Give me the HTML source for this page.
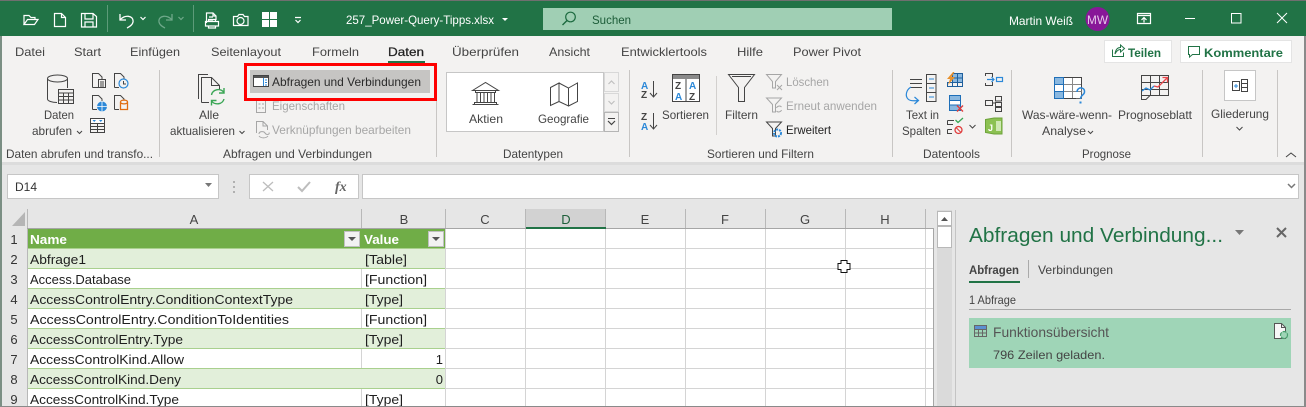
<!DOCTYPE html>
<html><head><meta charset="utf-8"><style>
html,body{margin:0;padding:0;width:1306px;height:407px;overflow:hidden;background:#e6e6e6}
svg{display:block}
text{font-family:"Liberation Sans",sans-serif;font-size:12px;fill:#444}
.w{fill:#fff}.g{fill:#a6a6a6}.d{fill:#222}.c{font-size:13px;fill:#1e1e1e}.h{font-size:13px;font-weight:bold;fill:#fff}
.n{font-size:13px;fill:#333;text-anchor:middle}
.s{fill:none;stroke:#444;stroke-width:1}.sg{fill:none;stroke:#a6a6a6;stroke-width:1}.sw{fill:none;stroke:#fff;stroke-width:1.2}
.b{fill:none;stroke:#2b88d8;stroke-width:1.2}
</style></head><body>
<svg width="1306" height="407" viewBox="0 0 1306 407" xmlns="http://www.w3.org/2000/svg">
<rect width="1306" height="407" fill="#e6e6e6"/>
<!-- title bar -->
<rect width="1306" height="36" fill="#217346"/>
<rect width="1306" height="1" fill="#6f6f6f"/>
<path class="sw" d="M24 24.5V15.500H29L31 17.500H35V19M24 24.500H34.500L38 19.500H27.500L24 24.500Z"/>
<path class="sw" d="M54.500 13.500H61.500L65.500 17.500V26.500H54.500ZM61.500 13.500V17.500H65.500"/>
<path class="sw" d="M81.500 13.500H93L96.500 16.500V27H81.500ZM85 13.500V19H93V13.500M85 27V22H93V27"/>
<rect x="107" y="5" width="1" height="27" fill="#5d9b79"/>
<path d="M120 14V20H126M120 20C124 14.500 134 15 133 22C132.500 25 130 26.500 127 28" fill="none" stroke="#fff" stroke-width="1.3"/>
<path class="sw" d="M140.500 17L143 19.500L145.500 17"/>
<path d="M172 14V20H166M172 20C168 14.500 158 15 159 22C159.500 25 162 26.500 165 28" fill="none" stroke="#6fa88a" stroke-width="1.3"/>
<path d="M178.500 17L181 19.500L183.500 17" fill="none" stroke="#6fa88a" stroke-width="1.2"/>
<rect x="193" y="5" width="1" height="27" fill="#5d9b79"/>
<path class="sw" d="M206.500 23V13H213L216 16V20M213 13V16H216M209 17H213M209 20H213"/>
<path class="sw" d="M205.500 21.500H218.500V26H205.500ZM208.500 21.500V19.500H215.500V21.500M208.500 26V28H215.500V26"/>
<path class="sw" d="M233.500 16.500H237.500L239 14.500H243L244.500 16.500H248V25.500H233.500Z"/><circle cx="240.500" cy="21" r="3.500" class="sw"/>
<path d="M262 12H269V19H262ZM270 12H277V19H270ZM262 20H269V27H262ZM270 20H277V27H270Z" fill="#fff"/>
<path class="sw" d="M295 17.500H301M295.500 20L298 22.500L300.500 20"/>
<text class="w" x="346" y="24" textLength="148" lengthAdjust="spacingAndGlyphs">257_Power-Query-Tipps.xlsx</text>
<path d="M502 18H508L505 21Z" fill="#fff"/>
<rect x="543" y="8" width="349" height="22" fill="#a0cfb4"/>
<circle cx="570.500" cy="17" r="4.800" fill="none" stroke="#1d6b40" stroke-width="1.2"/><path d="M567 20.500L562.500 25" stroke="#1d6b40" stroke-width="1.400"/>
<text x="592" y="24" textLength="39" lengthAdjust="spacingAndGlyphs" style="fill:#1c5c38">Suchen</text>
<text class="w" x="1009" y="25" textLength="64" lengthAdjust="spacingAndGlyphs">Martin Weiß</text>
<circle cx="1097.500" cy="19" r="12" fill="#881798"/>
<text x="1087" y="24" textLength="21" lengthAdjust="spacingAndGlyphs" style="fill:#e6c8ea">MW</text>
<path class="sw" d="M1137.500 13.500H1150.500V23.500H1137.500ZM1137.500 15.500H1150.500M1144 22.500V17.500M1141.500 20L1144 17.500L1146.500 20"/>
<rect x="1185" y="18" width="10" height="1" fill="#fff"/>
<rect x="1231.500" y="13.500" width="9.500" height="9.500" fill="none" stroke="#fff"/>
<path d="M1277 13L1287 23M1287 13L1277 23" stroke="#fff" stroke-width="1"/>
<!-- ribbon -->
<rect x="2" y="36" width="1302" height="126" fill="#f3f2f1"/>
<rect x="0" y="36" width="2" height="371" fill="#7b8f84"/>
<rect x="1304" y="36" width="2" height="371" fill="#8a8a8a"/>
<text x="15" y="56" textLength="30" lengthAdjust="spacingAndGlyphs">Datei</text>
<text x="74" y="56" textLength="27" lengthAdjust="spacingAndGlyphs">Start</text>
<text x="130" y="56" textLength="50" lengthAdjust="spacingAndGlyphs">Einfügen</text>
<text x="211" y="56" textLength="70" lengthAdjust="spacingAndGlyphs">Seitenlayout</text>
<text x="312" y="56" textLength="47" lengthAdjust="spacingAndGlyphs">Formeln</text>
<text x="388" y="56" textLength="36" lengthAdjust="spacingAndGlyphs" style="fill:#222;stroke:#222;stroke-width:.25">Daten</text>
<rect x="388" y="61" width="37" height="2" fill="#217346"/>
<text x="452" y="56" textLength="67" lengthAdjust="spacingAndGlyphs">Überprüfen</text>
<text x="549" y="56" textLength="41" lengthAdjust="spacingAndGlyphs">Ansicht</text>
<text x="621" y="56" textLength="86" lengthAdjust="spacingAndGlyphs">Entwicklertools</text>
<text x="737" y="56" textLength="26" lengthAdjust="spacingAndGlyphs">Hilfe</text>
<text x="793" y="56" textLength="68" lengthAdjust="spacingAndGlyphs">Power Pivot</text>
<rect x="1104.500" y="40.500" width="67" height="22" fill="#fff" stroke="#e4e4e4"/>
<path d="M1112.500 49.500V56.500H1123.500V52.500M1115 54C1115.500 50 1117.500 47.500 1120.500 47.500V45L1124.500 48.500L1120.500 52V49.500C1118.500 49.500 1116.500 51 1115 54Z" fill="none" stroke="#217346" stroke-width="1"/>
<text x="1128" y="57" textLength="33" lengthAdjust="spacingAndGlyphs" style="font-weight:bold;fill:#217346">Teilen</text>
<rect x="1180.500" y="40.500" width="111" height="22" fill="#fff" stroke="#e4e4e4"/>
<path d="M1188.500 46.500H1199.500V54.500H1192.500L1189.500 57V54.500H1188.500Z" fill="none" stroke="#217346"/>
<text x="1204" y="57" textLength="79" lengthAdjust="spacingAndGlyphs" style="font-weight:bold;fill:#217346">Kommentare</text>
<!-- separators -->
<path d="M159.500 70V157M436.500 70V157M629.500 70V157M892.500 70V157M1011.500 70V157M1202.500 70V157M1277.500 70V157" stroke="#c8c6c4"/>
<path d="M716.500 76V135" stroke="#d2d0ce"/>
<!-- group labels -->
<text x="6" y="158" textLength="147" lengthAdjust="spacingAndGlyphs">Daten abrufen und transfo...</text>
<text x="223" y="158" textLength="149" lengthAdjust="spacingAndGlyphs">Abfragen und Verbindungen</text>
<text x="503" y="158" textLength="60" lengthAdjust="spacingAndGlyphs">Datentypen</text>
<text x="707" y="158" textLength="107" lengthAdjust="spacingAndGlyphs">Sortieren und Filtern</text>
<text x="923" y="158" textLength="57" lengthAdjust="spacingAndGlyphs">Datentools</text>
<text x="1082" y="158" textLength="49" lengthAdjust="spacingAndGlyphs">Prognose</text>
<path class="s" d="M1286 157L1291 153L1296 157"/>
<!-- Daten abrufen -->
<path class="s" d="M47.500 79V99C47.500 101 52 102.500 57 102.500M67.500 79V88"/><ellipse cx="57.500" cy="78.500" rx="10" ry="3.500" class="s"/>
<path class="s" d="M58.500 89.500H73.500V103.500H58.500ZM58.500 93H73.500M58.500 96.500H73.500M58.500 100H73.500M63.500 93V103.500M68.500 93V103.500" fill="#f3f2f1"/>
<text x="44" y="119" textLength="30" lengthAdjust="spacingAndGlyphs">Daten</text>
<text x="32" y="135" textLength="40" lengthAdjust="spacingAndGlyphs">abrufen</text>
<path class="s" d="M77 131L79.500 133.500L82 131"/>
<path class="s" d="M92.500 87.500V73.500H98.500L102 77V79M92.500 87.500H98"/><path class="s" d="M98.500 79.500H105.500V87.500H98.500ZM100 82H104M100 84H104M100 86H104"/>
<path class="s" d="M114.500 87.500V73.500H120.500L124 77V79M114.500 87.500H119"/><circle cx="123.500" cy="83.500" r="4.500" fill="#f3f2f1" stroke="#2b88d8" stroke-width="1.200"/><path d="M123.500 81V84H126" stroke="#444" fill="none"/>
<path class="s" d="M92.500 109.500V95.500H98.500L102 99V101M92.500 109.500H97"/><circle cx="102" cy="106.500" r="5" fill="#2b88d8"/><path d="M97 106.500H107M102 101.500V111.500" stroke="#fff" stroke-width=".8"/>
<path class="s" d="M114.500 109.500V95.500H120.500L124 99V100M114.500 109.500H119"/><path d="M120.500 102V109.500H127.500V102M120.500 102C120.500 99.500 127.500 99.500 127.500 102S120.500 104.500 120.500 102Z" fill="#f3f2f1" stroke="#e06c10" stroke-width="1.300"/>
<path class="s" d="M90.500 118.500H104.500V132.500H90.500ZM90.500 123.500H104.500M90.500 126.500H104.500M90.500 129.500H104.500M97.500 123.500V132.500"/><rect x="91" y="119" width="13" height="4" fill="#fff"/><path d="M92.500 120H96L94.250 122ZM99 120H102.500L100.750 122Z" fill="#2b88d8"/>
<!-- Alle aktualisieren -->
<path class="s" d="M198.500 99V74.500H208"/><path class="s" d="M201.500 102.500V77.500H211.500L219.500 85.500V90M211.500 77.500V85.500H219.500M201.500 102.500H209"/>
<path d="M211.500 95C212.500 89.500 220 87.500 224 92.500M224 88V93H219M224 99C222.500 104.500 215 105.500 211.500 101M211.500 105.500V100.500H216.500" fill="none" stroke="#3aa655" stroke-width="1.400"/>
<text x="199" y="119" textLength="20" lengthAdjust="spacingAndGlyphs">Alle</text>
<text x="170" y="135" textLength="65" lengthAdjust="spacingAndGlyphs">aktualisieren</text>
<path class="s" d="M239.500 131L242 133.500L244.500 131"/>
<!-- highlighted -->
<rect x="250" y="70" width="180" height="23" fill="#c6c5c3"/>
<path class="sg" d="M256.500 100.500H265.500V112.500H256.500Z"/><path d="M258.500 104H260.500M262 104H264M258.500 108H260.500M262 108H264" stroke="#a6a6a6"/>
<rect x="245.500" y="64.500" width="190" height="35" fill="none" stroke="#fe0000" stroke-width="3"/>
<rect x="253.500" y="75.500" width="15" height="11" fill="#fff" stroke="#444"/><rect x="254" y="76" width="14" height="2" fill="#555"/><path d="M263.500 78V86" stroke="#2b88d8"/><path d="M265 80H267M265 82.500H267M265 85H267" stroke="#2b88d8"/>
<text x="272" y="86" textLength="149" lengthAdjust="spacingAndGlyphs" style="fill:#2a2a2a">Abfragen und Verbindungen</text>
<text class="g" x="272" y="110" textLength="73" lengthAdjust="spacingAndGlyphs">Eigenschaften</text>
<path class="sg" d="M256.500 133V121.500H263L267.500 126V130M263 121.500V126H267.500M259 134C259 131 264 131 265 133S270 135 269 132.500M259 136C261 138.500 266 138.500 268 136"/>
<text class="g" x="272" y="134" textLength="139" lengthAdjust="spacingAndGlyphs">Verknüpfungen bearbeiten</text>
<!-- Datentypen -->
<rect x="446.500" y="72.500" width="157" height="59" fill="#fff" stroke="#c6c6c6"/>
<rect x="604.500" y="72.500" width="14" height="19" fill="#f3f2f1" stroke="#d8d8d8"/><path d="M608.500 84L611.500 81L614.500 84" fill="none" stroke="#c0c0c0" stroke-width="1.200"/>
<rect x="604.500" y="93.500" width="14" height="18" fill="#f3f2f1" stroke="#d8d8d8"/><path d="M608.500 101L611.500 104L614.500 101" fill="none" stroke="#c0c0c0" stroke-width="1.200"/>
<rect x="604.500" y="112.500" width="14" height="19" fill="#f3f2f1" stroke="#b5b5b5"/><path d="M608 118.500H615" stroke="#444"/><path d="M608 121L611.500 124.500L615 121" fill="none" stroke="#444" stroke-width="1.200"/>
<path class="s" d="M472.500 90.500L485.500 82.500L498.500 90.500ZM475.500 90.500V92.500H495.500V90.500M472.500 104.500H498.500M474.500 102.500H496.500V104.500H474.500ZM477 92.500V102.500M480.500 92.500V102.500M484 92.500V102.500M487.500 92.500V102.500M491 92.500V102.500M494.500 92.500V102.500"/>
<text x="469" y="123" textLength="34" lengthAdjust="spacingAndGlyphs">Aktien</text>
<path class="s" d="M550.500 87.500L559 83V101.500L550.500 105.500ZM559 83L568.500 88V106L559 101.500M568.500 88L577.500 83V101.500L568.500 106"/>
<text x="538" y="123" textLength="51" lengthAdjust="spacingAndGlyphs">Geografie</text>
<!-- Sort -->
<text x="641" y="89" style="font-size:10px;font-weight:bold;fill:#2b88d8">A</text><text x="641" y="98" style="font-size:10px;font-weight:bold;fill:#444">Z</text>
<path d="M653.500 81V96.500M650 93L653.500 97L657 93" class="s"/>
<text x="641" y="120" style="font-size:10px;font-weight:bold;fill:#444">Z</text><text x="641" y="130" style="font-size:10px;font-weight:bold;fill:#2b88d8">A</text>
<path d="M653.500 113V128.500M650 125L653.500 129L657 125" class="s"/>
<rect x="672.500" y="74.500" width="27" height="27" fill="#fff" stroke="#444"/><rect x="673" y="75" width="26" height="4" fill="#8a8a8a"/><path d="M686 79V101" stroke="#444"/>
<text x="675" y="89" style="font-size:10px;font-weight:bold;fill:#444">Z</text><text x="675" y="100" style="font-size:10px;font-weight:bold;fill:#2b88d8">A</text>
<text x="689" y="89" style="font-size:10px;font-weight:bold;fill:#2b88d8">A</text><text x="689" y="100" style="font-size:10px;font-weight:bold;fill:#444">Z</text>
<text x="662" y="119" textLength="47" lengthAdjust="spacingAndGlyphs">Sortieren</text>
<!-- Filter -->
<path class="s" d="M728.500 74.500H754.500L744.500 87.500V101.500H738.500V87.500ZM732 76.500H751" stroke-width="1.100"/>
<text x="725" y="119" textLength="33" lengthAdjust="spacingAndGlyphs">Filtern</text>
<path class="sg" d="M766.500 74.500H781.500L775.500 81.500V88H772.500V81.500ZM777 85L782 90M782 85L777 90" stroke-width="1.200"/>
<text class="g" x="786" y="86" textLength="43" lengthAdjust="spacingAndGlyphs">Löschen</text>
<path class="sg" d="M766.500 98H781.500L775.500 104.500V112H772.500V104.500ZM776.500 108A3 3 0 0 1 781.500 107M781.500 110A3 3 0 0 1 776.500 111"/>
<text class="g" x="786" y="110" textLength="91" lengthAdjust="spacingAndGlyphs">Erneut anwenden</text>
<path class="s" d="M766.500 122H781.500L775.500 128.500V136H772.500V128.500Z"/><circle cx="777.500" cy="133" r="3.500" fill="none" stroke="#2b88d8" stroke-width="2" stroke-dasharray="2 1"/>
<text class="d" x="786" y="134" textLength="45" lengthAdjust="spacingAndGlyphs">Erweitert</text>
<!-- Text in Spalten -->
<path class="s" d="M910 79.500H922M910 83.500H922M910 87.500H922"/>
<rect x="926.500" y="74.500" width="9.500" height="27" fill="none" stroke="#444"/><path class="s" d="M926.500 83.500H936M926.500 92.500H936"/><path d="M929 79H934M929 88H934M929 97H934" stroke="#2b88d8"/>
<path class="b" d="M911 87C906 90 905 96 908 99C910 101 914 101 918 100.500M914.500 97L918.500 100.500L914.500 104"/>
<text x="906" y="119" textLength="33" lengthAdjust="spacingAndGlyphs">Text in</text>
<text x="902" y="135" textLength="39" lengthAdjust="spacingAndGlyphs">Spalten</text>
<rect x="953" y="73" width="10" height="9" fill="#8ab8e0"/><path d="M947.500 82.500H962.500V86.500H947.500ZM952.500 74V86.500M957.500 73.500V86.500M952.500 73.500H962.500V86.500M952.500 78H962.500" fill="none" stroke="#1f5f9c"/><path d="M953 72L947 79H950L948 85L955 77H951.500L954.500 72Z" fill="#e8912d"/>
<rect x="949.500" y="95.500" width="11" height="15" fill="#fff" stroke="#1f6fb8"/><rect x="949.500" y="95.500" width="11" height="5" fill="#8ab8e0" stroke="#1f6fb8"/><rect x="949.500" y="105" width="11" height="5.500" fill="#8ab8e0" stroke="#1f6fb8"/><path d="M957 105.500L963 111.500M963 105.500L957 111.500" stroke="#e03c3c" stroke-width="1.400"/>
<path class="s" d="M947.500 120.500H954M947.500 120.500V124.500H953M947.500 129.500H952M947.500 129.500V133.500H952"/><path d="M955.500 120L958 122.500L963 118" fill="none" stroke="#3aa655" stroke-width="1.300"/><circle cx="958.500" cy="130" r="3.500" fill="none" stroke="#e03c3c" stroke-width="1.300"/><path d="M956 127.500L961 132.500" stroke="#e03c3c"/>
<path class="s" d="M969.500 125L972.500 128L975.500 125"/>
<path class="s" d="M985.500 76V73.500H992.500V77M992.500 82V85.500H985.500V83"/><path d="M987 79.500H994M991.500 77L994 79.500L991.500 82" class="b"/><rect x="996.500" y="77.500" width="6" height="4" class="b"/>
<path class="s" d="M985.500 100.500H992.500V105.500H985.500ZM995.500 96.500H1001.500V101H995.500ZM995.500 102.500H1001.500V106.500H995.500ZM995.500 107.500H1001.500V111.500H995.500ZM992.500 103H995.500"/>
<path d="M985.500 119.500L994 118H1002V134H994L985.500 132.500Z" fill="#8cc152" stroke="#6da33a"/><rect x="996" y="121" width="5" height="10" fill="#cfe8b3"/><text x="988" y="131" style="font-size:9px;font-weight:bold;fill:#fff">J</text>
<!-- Was-waere-wenn -->
<rect x="1054.500" y="77.500" width="27" height="21" fill="#fff" stroke="#666"/><path d="M1063.500 77.500V98.500M1072.500 77.500V98.500M1054.500 84.500H1081.500M1054.500 91.500H1081.500" stroke="#888"/><path d="M1054.500 77.500H1081.500V88M1054.500 98.500H1076" fill="none" stroke="#444"/>
<rect x="1054.500" y="77.500" width="9" height="7" fill="#8ab8e0" stroke="#1f6fb8"/><rect x="1054.500" y="91.500" width="9" height="7" fill="#8ab8e0" stroke="#1f6fb8"/><path d="M1054.500 84.500H1063.500V91.500H1054.500Z" fill="#fff" stroke="#1f6fb8"/>
<path d="M1077 92C1077 86.500 1085 86.500 1084.500 92C1084.500 95 1080.500 95 1080.500 99" fill="none" stroke="#2b88d8" stroke-width="1.500"/><rect x="1079.500" y="101.500" width="2" height="2" fill="#2b88d8"/>
<text x="1022" y="119" textLength="90" lengthAdjust="spacingAndGlyphs">Was-wäre-wenn-</text>
<text x="1042" y="135" textLength="44" lengthAdjust="spacingAndGlyphs">Analyse</text>
<path class="s" d="M1088 131L1090.500 133.500L1093 131"/>
<path class="s" d="M1141.500 75.500H1168.500V95.500H1150L1146 99.500H1141.500ZM1141.500 82.500H1168.500M1141.500 89.500H1168.500M1150.500 75.500V95.500M1159.500 75.500V95.500M1142 95.500H1150"/>
<path d="M1142 91L1146 88L1150 90L1154 86" fill="none" stroke="#2b88d8" stroke-width="1.300"/><path d="M1154 86L1158 87L1167 78M1162.500 77.500H1167.500V82.500" fill="none" stroke="#e8474c" stroke-width="1.300"/>
<text x="1118" y="119" textLength="74" lengthAdjust="spacingAndGlyphs">Prognoseblatt</text>
<rect x="1224.500" y="70.500" width="31" height="30" fill="#fff" stroke="#c6c6c6"/>
<path class="s" d="M1232.500 81.500H1239.500V90.500H1232.500ZM1241.500 79.500H1247.500V91.500H1241.500ZM1241.500 83.500H1247.500M1241.500 87.500H1247.500"/><path d="M1234 86H1238M1236 84V88" stroke="#2b88d8"/>
<text x="1211" y="118" textLength="58" lengthAdjust="spacingAndGlyphs">Gliederung</text>
<path class="s" d="M1236.500 127L1239.500 130L1242.500 127"/>
<!-- separator strip / formula bar -->
<rect x="2" y="162" width="1302" height="3" fill="#dcdcdc"/>
<rect x="7.500" y="174.500" width="211" height="24" fill="#fff" stroke="#c6c6c6"/>
<text x="15" y="191" textLength="22" lengthAdjust="spacingAndGlyphs" style="fill:#333">D14</text>
<path d="M205 183H212L208.500 187Z" fill="#777"/>
<path d="M234 181V183M234 186V188M234 191V193" stroke="#b0b0b0" stroke-width="2"/>
<rect x="249.500" y="174.500" width="109" height="24" fill="#fff" stroke="#c6c6c6"/>
<path d="M263 182L273 191M273 182L263 191" stroke="#bdbdbd" stroke-width="1.300"/>
<path d="M298 187L302 191L310 182" fill="none" stroke="#bdbdbd" stroke-width="2"/>
<text x="335" y="191" style="font-family:'Liberation Serif',serif;font-style:italic;font-weight:bold;font-size:14px;fill:#666">fx</text>
<rect x="362.500" y="174.500" width="936" height="24" fill="#fff" stroke="#c6c6c6"/>
<path d="M1288 184L1291.500 187.500L1295 184" fill="none" stroke="#777" stroke-width="1.500"/>
<!-- grid -->
<rect x="28" y="229" width="905" height="178" fill="#fff"/>
<rect x="2" y="209" width="923" height="19" fill="#e6e6e6"/>
<rect x="526" y="209" width="80" height="19" fill="#d2d2d2"/>
<path d="M12 226H25V212Z" fill="#b5b5b5"/>
<path d="M27.500 209V407M361.500 209V228M445.500 209V228M525.500 209V228M605.500 209V228M685.500 209V228M765.500 209V228M845.500 209V228M925.500 209V228" stroke="#b8b8b8"/>
<path d="M27 228.500H933.500V407" fill="none" stroke="#a6a6a6"/>
<rect x="526" y="227" width="80" height="2" fill="#217346"/>
<g fill="none" stroke="#d4d4d4">
<path d="M446 248.500H933M446 268.500H933M446 288.500H933M446 308.500H933M446 328.500H933M446 348.500H933M446 368.500H933M446 388.500H933"/>
<path d="M445.500 229V407M525.500 229V407M605.500 229V407M685.500 229V407M765.500 229V407M845.500 229V407M925.500 229V407"/>
</g>
<rect x="28" y="229" width="417" height="20" fill="#70ad47"/>
<rect x="28" y="249" width="417" height="20" fill="#e2efda"/>
<rect x="28" y="289" width="417" height="20" fill="#e2efda"/>
<rect x="28" y="329" width="417" height="20" fill="#e2efda"/>
<rect x="28" y="369" width="417" height="20" fill="#e2efda"/>
<path d="M361.500 269V289M361.500 309V329M361.500 349V369M361.500 389V407" stroke="#d4d4d4"/>
<path d="M28 248.500H445M28 268.500H445M28 288.500H445M28 308.500H445M28 328.500H445M28 348.500H445M28 368.500H445M28 388.500H445" stroke="#a9d08e"/>
<rect x="344.500" y="231.500" width="15" height="15" fill="#f2f2f2" stroke="#c0c0c0"/><path d="M348 237H356L352 241Z" fill="#555"/>
<rect x="428.500" y="231.500" width="15" height="15" fill="#f2f2f2" stroke="#c0c0c0"/><path d="M432 237H440L436 241Z" fill="#555"/>
<g text-anchor="middle" style="font-size:13px">
<text x="194" y="224" style="font-size:13px">A</text><text x="404" y="224" style="font-size:13px">B</text><text x="485" y="224" style="font-size:13px">C</text><text x="566" y="224" style="font-size:13px;fill:#1e5f3a">D</text><text x="645" y="224" style="font-size:13px">E</text><text x="725" y="224" style="font-size:13px">F</text><text x="805" y="224" style="font-size:13px">G</text><text x="885" y="224" style="font-size:13px">H</text>
</g>
<text class="n" x="14" y="244">1</text><text class="n" x="14" y="264">2</text><text class="n" x="14" y="284">3</text><text class="n" x="14" y="304">4</text><text class="n" x="14" y="324">5</text><text class="n" x="14" y="344">6</text><text class="n" x="14" y="364">7</text><text class="n" x="14" y="384">8</text><text class="n" x="14" y="404">9</text>
<text class="h" x="30" y="244" textLength="37" lengthAdjust="spacingAndGlyphs">Name</text>
<text class="h" x="364" y="244" textLength="35" lengthAdjust="spacingAndGlyphs">Value</text>
<text class="c" x="30" y="264" textLength="56" lengthAdjust="spacingAndGlyphs">Abfrage1</text>
<text class="c" x="30" y="284" textLength="101" lengthAdjust="spacingAndGlyphs">Access.Database</text>
<text class="c" x="30" y="304" textLength="263" lengthAdjust="spacingAndGlyphs">AccessControlEntry.ConditionContextType</text>
<text class="c" x="30" y="324" textLength="259" lengthAdjust="spacingAndGlyphs">AccessControlEntry.ConditionToIdentities</text>
<text class="c" x="30" y="344" textLength="153" lengthAdjust="spacingAndGlyphs">AccessControlEntry.Type</text>
<text class="c" x="30" y="364" textLength="154" lengthAdjust="spacingAndGlyphs">AccessControlKind.Allow</text>
<text class="c" x="30" y="384" textLength="151" lengthAdjust="spacingAndGlyphs">AccessControlKind.Deny</text>
<text class="c" x="30" y="404" textLength="149" lengthAdjust="spacingAndGlyphs">AccessControlKind.Type</text>
<text class="c" x="365" y="264" textLength="42" lengthAdjust="spacingAndGlyphs">[Table]</text>
<text class="c" x="365" y="284" textLength="62" lengthAdjust="spacingAndGlyphs">[Function]</text>
<text class="c" x="365" y="304" textLength="38" lengthAdjust="spacingAndGlyphs">[Type]</text>
<text class="c" x="365" y="324" textLength="62" lengthAdjust="spacingAndGlyphs">[Function]</text>
<text class="c" x="365" y="344" textLength="38" lengthAdjust="spacingAndGlyphs">[Type]</text>
<text class="c" x="443" y="364" text-anchor="end">1</text>
<text class="c" x="443" y="384" text-anchor="end">0</text>
<text class="c" x="365" y="404" textLength="38" lengthAdjust="spacingAndGlyphs">[Type]</text>
<!-- scrollbar -->
<rect x="937" y="210" width="15" height="197" fill="#dadada"/>
<rect x="937.500" y="211.500" width="14" height="14" fill="#fff" stroke="#b8b8b8"/><path d="M941 221L944.500 217L948 221Z" fill="#555"/>
<rect x="937.500" y="226.500" width="14" height="21" fill="#fff" stroke="#b8b8b8"/>
<rect x="955" y="210" width="1" height="197" fill="#c4c4c4"/>
<!-- cross cursor -->
<path d="M841 260.500H847V263.500H850V269.500H847V272.500H841V269.500H838V263.500H841Z" fill="#fff" stroke="#111" stroke-width="1"/>
<!-- pane -->
<text x="969" y="242" textLength="254" lengthAdjust="spacingAndGlyphs" style="font-size:20px;fill:#217346">Abfragen und Verbindung...</text>
<path d="M1235 230H1244L1239.500 235Z" fill="#777"/>
<path d="M1277 228L1286 237M1286 228L1277 237" stroke="#666" stroke-width="2"/>
<text x="969" y="274" textLength="50" lengthAdjust="spacingAndGlyphs" style="font-weight:bold;fill:#444">Abfragen</text>
<rect x="969" y="281" width="51" height="2" fill="#217346"/>
<rect x="1028" y="260" width="1" height="18" fill="#aaa"/>
<text x="1038" y="274" textLength="75" lengthAdjust="spacingAndGlyphs">Verbindungen</text>
<text x="969" y="304" textLength="47" lengthAdjust="spacingAndGlyphs">1 Abfrage</text>
<rect x="969" y="309" width="322" height="1" fill="#a8a8a8"/>
<rect x="969" y="318" width="322" height="50" fill="#9fd5b7"/>
<path d="M974.500 325.500H986.500V336.500H974.500ZM974.500 329.500H986.500M974.500 333H986.500M978.500 329.500V336.500M982.500 329.500V336.500" fill="none" stroke="#666"/><rect x="975" y="326" width="11" height="3" fill="#5b8fd0"/>
<text x="993" y="337" textLength="116" lengthAdjust="spacingAndGlyphs" style="font-size:14px;fill:#555">Funktionsübersicht</text>
<text x="993" y="359" textLength="112" lengthAdjust="spacingAndGlyphs" style="fill:#444">796 Zeilen geladen.</text>
<path d="M1274.500 323.500H1281.500L1285.500 327.500V338.500H1274.500Z" fill="#f7f7f7" stroke="#555"/><path d="M1281.500 323.500V327.500H1285.500" fill="none" stroke="#555"/>
<circle cx="1284" cy="335" r="3.500" fill="#9fd5b7" stroke="#4aa06e" stroke-width="1.200" stroke-dasharray="4 1"/>
<rect x="0" y="406" width="1306" height="1" fill="#8a8a8a"/>
</svg>
</body></html>
